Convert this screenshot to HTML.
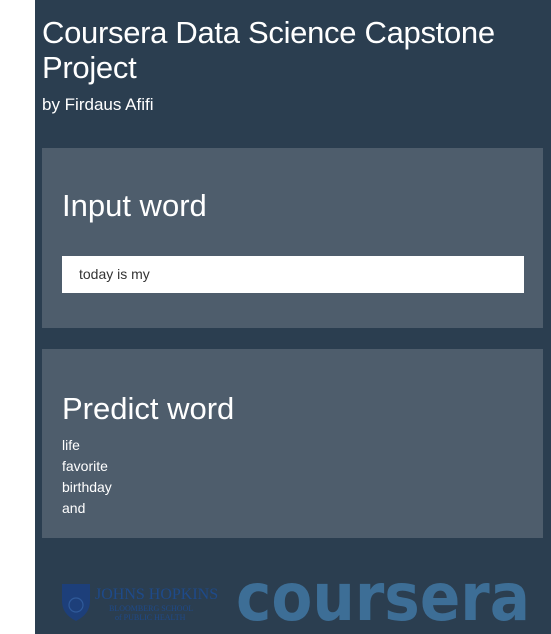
<!DOCTYPE html>
<html><head><meta charset="utf-8">
<style>
html,body{margin:0;padding:0;width:551px;height:634px;overflow:hidden;background:#fff;font-family:"Liberation Sans","DejaVu Sans",sans-serif;}
#main{position:absolute;left:35px;top:0;width:516px;height:634px;background:#2b3e50;color:#fff;}
h1{position:absolute;left:7px;top:15px;margin:0;font-weight:normal;font-size:31px;line-height:35px;letter-spacing:-0.3px;}
.by{position:absolute;left:7px;top:95px;font-size:17px;}
.panel{position:absolute;left:7px;width:501px;background:#4e5d6c;}
.p1{top:148px;height:180px;}
.p2{top:349px;height:189px;}
.panel h2{position:absolute;left:20px;margin:0;font-weight:normal;font-size:31px;}
.p1 h2{top:40px;}
.p2 h2{top:42px;}
.inp{position:absolute;left:20px;top:108px;width:462px;height:37px;background:#fff;color:#333;font-size:14px;line-height:37px;box-sizing:border-box;padding-left:17px;}
.list{position:absolute;left:20px;top:86px;font-size:14px;line-height:21px;}
.jh{position:absolute;left:27px;top:583px;}
.cs{position:absolute;left:190px;top:560px;}
</style></head><body>
<div id="main">
<h1>Coursera Data Science Capstone<br>Project</h1>
<div class="by">by Firdaus Afifi</div>
<div class="panel p1"><h2>Input word</h2><div class="inp">today is my</div></div>
<div class="panel p2"><h2>Predict word</h2><div class="list">life<br>favorite<br>birthday<br>and</div></div>
<svg class="jh" width="165" height="42" viewBox="0 0 165 42">
<path d="M0 1 H28 V18 Q28 31 14 38 Q0 31 0 18 Z" fill="#1d3f7a"/>
<circle cx="14" cy="22" r="7" fill="none" stroke="#2f5a9a" stroke-width="1.2"/>
<text x="33" y="16" font-family="Liberation Serif,serif" font-size="16" fill="#1e4a8a">JOHNS HOPKINS</text>
<text x="47" y="28" font-family="Liberation Serif,serif" font-size="8" fill="#1e4a8a">BLOOMBERG SCHOOL</text>
<text x="53" y="37" font-family="Liberation Serif,serif" font-size="8" fill="#1e4a8a">of PUBLIC HEALTH</text>
</svg>
<svg class="cs" width="320" height="74" viewBox="0 0 320 74">
<text x="11" y="60" font-family="DejaVu Sans,sans-serif" font-weight="bold" font-size="66" fill="#3d6e96" textLength="294" lengthAdjust="spacingAndGlyphs">coursera</text>
</svg>
</div>
</body></html>
